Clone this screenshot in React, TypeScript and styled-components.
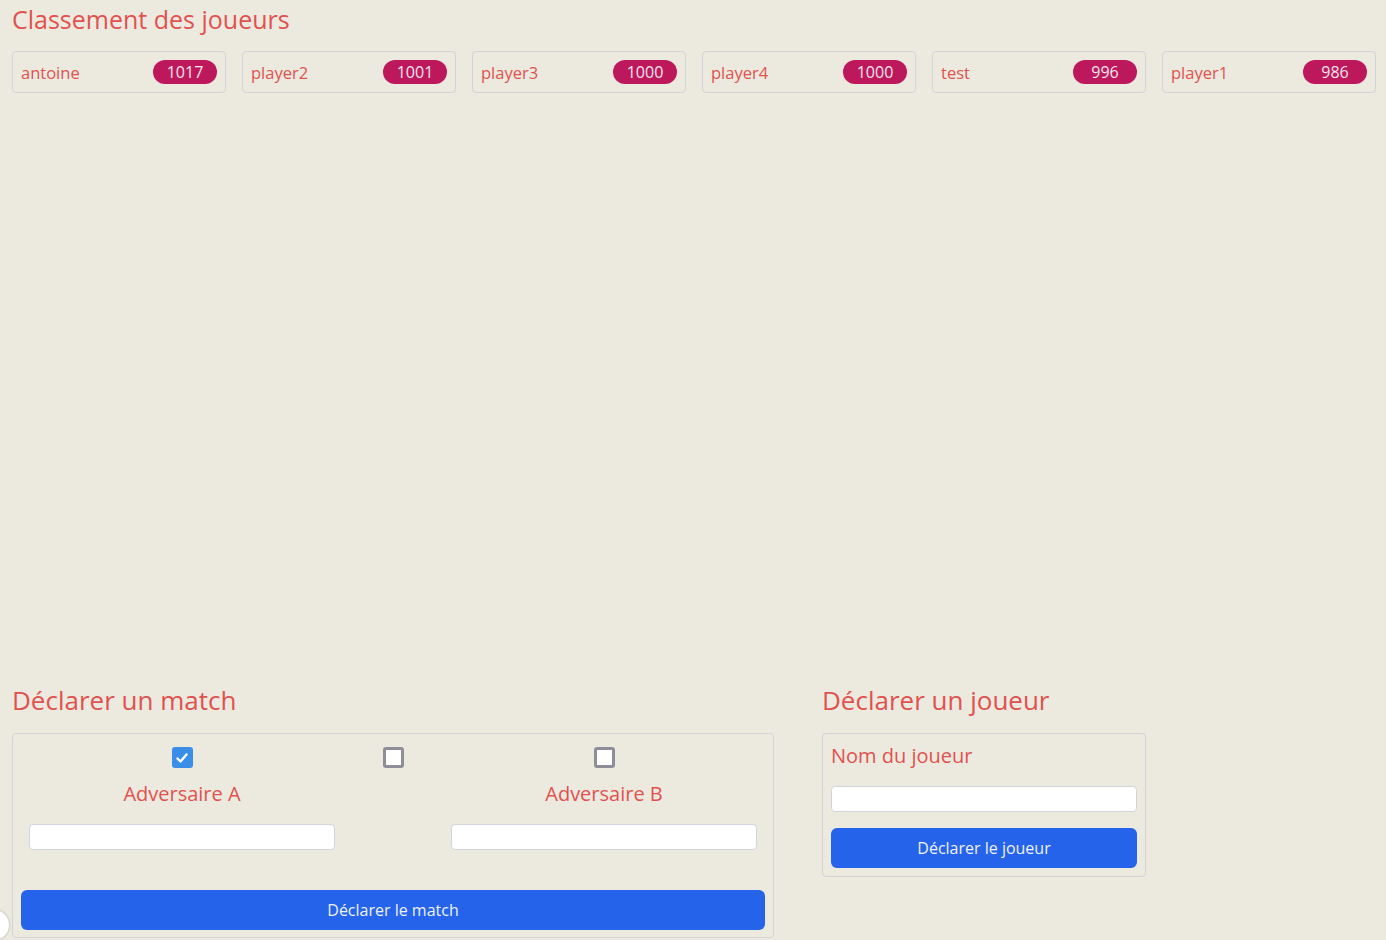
import React from "react";
import styled, { createGlobalStyle } from "styled-components";

const Global = createGlobalStyle`
  html, body { margin: 0; padding: 0; background: #ece9df; }
  body { font-family: "Open Sans", "DejaVu Sans", sans-serif; color: #e0524f; overflow: hidden; }
  * { box-sizing: border-box; }
`;

const Page = styled.div`
  width: 1386px;
  height: 940px;
  padding: 0 10px 0 12px;
  display: flex;
  flex-direction: column;
  position: relative;
`;

const Title = styled.h1<{ $size?: number }>`
  margin: 0;
  font-weight: 400;
  font-size: ${(p) => p.$size ?? 25}px;
  line-height: ${(p) => Math.round((p.$size ?? 25) * 1.5)}px;
  color: #e0524f;
  white-space: nowrap;
`;

const Ranking = styled.div`
  margin-top: 13px;
  display: grid;
  grid-template-columns: repeat(6, 214px);
  column-gap: 16px;
`;

const Card = styled.div`
  height: 42px;
  border: 1px solid #d3d3da;
  border-radius: 4px;
  padding: 0 8px;
  display: flex;
  align-items: center;
  justify-content: space-between;
  font-size: 16.5px;
`;

const Badge = styled.span`
  width: 64px;
  height: 24px;
  border-radius: 12px;
  background: #be185d;
  color: #f4e4ec;
  font-size: 16px;
  display: flex;
  align-items: center;
  justify-content: center;
`;

const Spacer = styled.div`
  height: 588px;
`;

const Bottom = styled.div`
  display: flex;
  gap: 48px;
  align-items: flex-start;
`;

const Section = styled.section<{ $w: number }>`
  width: ${(p) => p.$w}px;
  display: flex;
  flex-direction: column;
  gap: 13px;
`;

const Panel = styled.div<{ $pb: number }>`
  border: 1px solid #d3d3da;
  border-radius: 4px;
  padding: 8px 8px ${(p) => p.$pb}px;
  display: flex;
  flex-direction: column;
`;

const Versus = styled.div`
  display: grid;
  grid-template-columns: 306px 116px 306px;
  padding: 5px 8px 0;
`;

const Column = styled.div`
  display: flex;
  flex-direction: column;
  align-items: center;
`;

const Box = styled.span<{ $checked?: boolean }>`
  width: 21px;
  height: 21px;
  border-radius: 3px;
  border: ${(p) => (p.$checked ? "none" : "3px solid #8f8e98")};
  background: ${(p) => (p.$checked ? "#3b8ee8" : "#ffffff")};
  display: flex;
  align-items: center;
  justify-content: center;
`;

const Label = styled.div`
  margin-top: 11px;
  font-size: 20px;
  line-height: 30px;
  white-space: nowrap;
`;

const Input = styled.input`
  width: 100%;
  height: 26px;
  border: 1px solid #d1d5db;
  border-radius: 4px;
  background: #fff;
  outline: none;
`;

const SideInput = styled(Input)`
  margin-top: 15px;
`;

const Button = styled.button`
  width: 100%;
  height: 40px;
  border: none;
  border-radius: 6px;
  background: #2563eb;
  color: #eef2fb;
  font-family: inherit;
  font-size: 16px;
  cursor: pointer;
`;

const MatchButton = styled(Button)`
  margin-top: 40px;
`;

const NameLabel = styled.div`
  font-size: 20px;
  line-height: 28px;
`;

const NameInput = styled(Input)`
  margin-top: 16px;
`;

const PlayerButton = styled(Button)`
  margin-top: 16px;
`;

const Fab = styled.div`
  position: fixed;
  left: -21px;
  top: 910px;
  width: 30px;
  height: 30px;
  border-radius: 50%;
  background: #fff;
  box-shadow: 0 0 3px rgba(0,0,0,0.25);
`;

const players = [
  ["antoine", 1017],
  ["player2", 1001],
  ["player3", 1000],
  ["player4", 1000],
  ["test", 996],
  ["player1", 986],
] as const;

const Check = () => (
  <svg width="14" height="14" viewBox="0 0 14 14">
    <path d="M2.5 7.5 L5.5 10.5 L11.5 3.5" stroke="#fff" strokeWidth="2.4" fill="none" strokeLinecap="round" strokeLinejoin="round" />
  </svg>
);

export default function App() {
  return (
    <>
      <Global />
      <Page>
        <Title>Classement des joueurs</Title>
        <Ranking>
          {players.map(([n, s]) => (
            <Card key={n}>
              <span>{n}</span>
              <Badge>{s}</Badge>
            </Card>
          ))}
        </Ranking>
        <Spacer />
        <Bottom>
          <Section $w={762}>
            <Title $size={26}>Déclarer un match</Title>
            <Panel $pb={7}>
              <Versus>
                <Column>
                  <Box $checked><Check /></Box>
                  <Label>Adversaire A</Label>
                  <SideInput />
                </Column>
                <Column>
                  <Box />
                </Column>
                <Column>
                  <Box />
                  <Label>Adversaire B</Label>
                  <SideInput />
                </Column>
              </Versus>
              <MatchButton>Déclarer le match</MatchButton>
            </Panel>
          </Section>
          <Section $w={324}>
            <Title $size={26}>Déclarer un joueur</Title>
            <Panel $pb={8}>
              <NameLabel>Nom du joueur</NameLabel>
              <NameInput />
              <PlayerButton>Déclarer le joueur</PlayerButton>
            </Panel>
          </Section>
        </Bottom>
        <Fab />
      </Page>
    </>
  );
}
